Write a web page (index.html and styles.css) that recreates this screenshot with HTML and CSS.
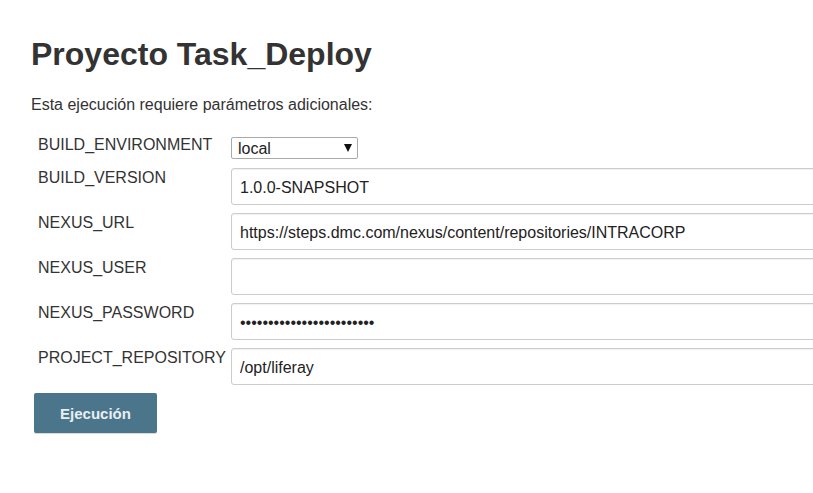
FILE: index.html
```html
<!DOCTYPE html>
<html lang="es">
<head>
<meta charset="utf-8">
<title>Proyecto Task_Deploy</title>
<link rel="stylesheet" href="styles.css">
</head>
<body>
<div class="page">
  <h1 class="title">Proyecto Task_Deploy</h1>
  <p class="intro">Esta ejecución requiere parámetros adicionales:</p>
  <form class="params">
    <div class="row row-select">
      <label class="label">BUILD_ENVIRONMENT</label>
      <div class="select-wrap">
        <select class="select"><option>local</option></select>
      </div>
    </div>
    <div class="row">
      <label class="label">BUILD_VERSION</label>
      <input class="field" type="text" value="1.0.0-SNAPSHOT">
    </div>
    <div class="row">
      <label class="label">NEXUS_URL</label>
      <input class="field" type="text" value="https://steps.dmc.com/nexus/content/repositories/INTRACORP">
    </div>
    <div class="row">
      <label class="label">NEXUS_USER</label>
      <input class="field" type="text" value="">
    </div>
    <div class="row">
      <label class="label">NEXUS_PASSWORD</label>
      <input class="field" type="password" value="abcdefghijklmnopqrstuvwx">
    </div>
    <div class="row">
      <label class="label">PROJECT_REPOSITORY</label>
      <input class="field" type="text" value="/opt/liferay">
    </div>
    <div class="actions">
      <button class="btn" type="button">Ejecución</button>
    </div>
  </form>
</div>
</body>
</html>
```

FILE: styles.css
```css
* { box-sizing: border-box; }
html, body { margin: 0; padding: 0; background: #fff; overflow: hidden; }
body {
  font-family: "Liberation Sans", Arial, sans-serif;
  color: #333;
  width: 813px;
  height: 493px;
}
.page {
  padding: 36px 0 0 31px;
}
.title {
  margin: 0;
  font-size: 32px;
  font-weight: bold;
  line-height: 37px;
  color: #333;
}
.intro {
  margin: 23px 0 0 0;
  font-size: 16px;
  line-height: 18px;
  color: #333;
}
.params {
  margin-top: 22px;
  display: flex;
  flex-direction: column;
  gap: 8px;
}
.row {
  display: grid;
  grid-template-columns: 193px 620px;
  align-items: start;
  padding-left: 7px;
}
.row-select { margin-bottom: 1px; }
.label {
  font-size: 16px;
  line-height: 18px;
  color: #333;
  padding-top: 1px;
  white-space: nowrap;
}
.row-select .label { padding-top: 0; }
.select-wrap {
  position: relative;
  width: 127px;
  height: 22px;
  margin-top: 1px;
}
.select {
  appearance: none;
  -webkit-appearance: none;
  width: 127px;
  height: 22px;
  border: 1px solid #a9a9a9;
  border-radius: 2px;
  background: #fff;
  font-family: "Liberation Sans", Arial, sans-serif;
  font-size: 16px;
  color: #222;
  padding: 0 0 0 6px;
  margin: 0;
}
.select-wrap::after {
  content: "";
  position: absolute;
  right: 6px;
  top: 7px;
  width: 0;
  height: 0;
  border-left: 4px solid transparent;
  border-right: 4px solid transparent;
  border-top: 8px solid #111;
  pointer-events: none;
}
.field {
  width: 620px;
  height: 37px;
  border: 1px solid #ccc;
  border-radius: 3px;
  box-shadow: inset 0 1px 1px rgba(0,0,0,0.06);
  padding: 2px 8px 0 8px;
  font-family: "Liberation Sans", Arial, sans-serif;
  font-size: 16px;
  color: #222;
  background: #fff;
  margin: 0;
  outline: none;
}
.actions {
  padding-left: 3px;
}
.btn {
  width: 123px;
  height: 40px;
  background: #4b758b;
  border: none;
  border-radius: 2px;
  box-shadow: 0 1px 0 rgba(0,0,0,0.15);
  color: #e8eef1;
  font-family: "Liberation Sans", Arial, sans-serif;
  font-weight: bold;
  font-size: 15px;
  padding: 0;
  cursor: pointer;
}
```
